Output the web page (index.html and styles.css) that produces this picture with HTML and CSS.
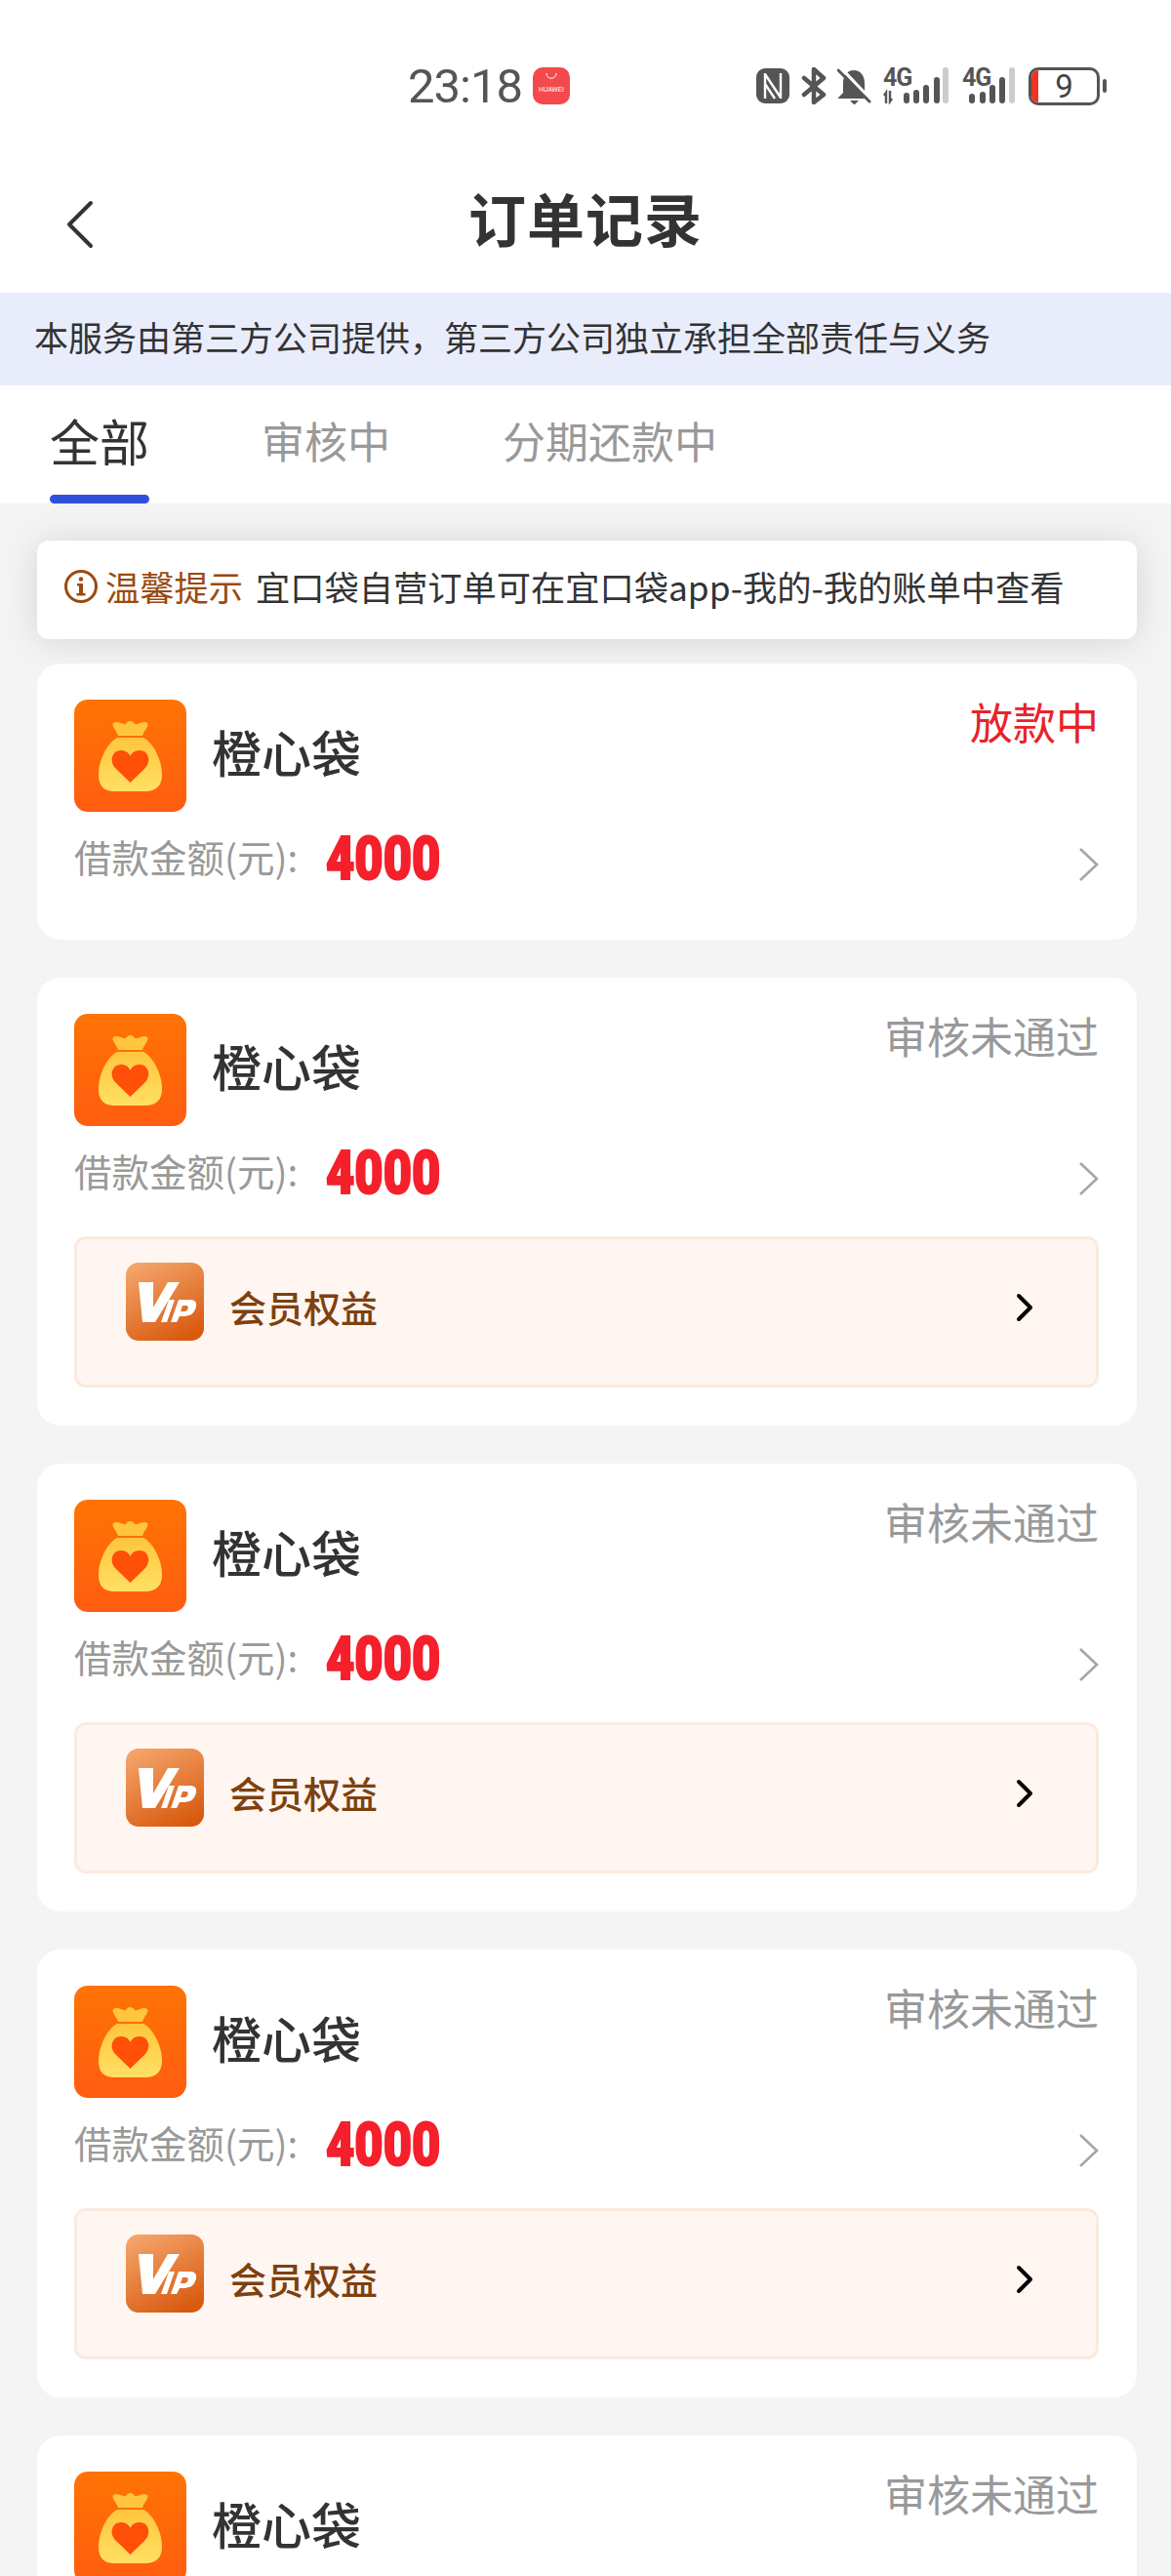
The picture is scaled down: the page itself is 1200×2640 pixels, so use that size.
FILE: index.html
```html
<!DOCTYPE html>
<html lang="zh-CN">

<head>
    <meta charset="UTF-8">
    <title>订单记录</title>
    <link rel="stylesheet" href="styles.css">
</head>

<body>
    <div class="page">
        <div class="status-bar">
            <span class="clock">23:18</span>
            <svg class="hw-icon" width="38" height="38" viewBox="0 0 38 38">
                <rect width="38" height="38" rx="10" fill="#f4494d" />
                <path d="M14 6c0 7 10 7 10 0" fill="none" stroke="#fff" stroke-width="1" />
                <text x="19" y="25" text-anchor="middle" class="hw-label">HUAWEI</text>
            </svg>
            <div class="status-icons">
                <svg width="34" height="38" viewBox="0 0 34 38">
                    <rect y="1" width="34" height="36" rx="9" fill="#555" />
                    <path d="M9 6v26M25 6v26M9 7l16 24M9 17l10 15" fill="none" stroke="#fff" stroke-width="2.4" />
                </svg>
                <svg class="bt" width="26" height="38" viewBox="0 0 26 38">
                    <path d="M3 11l20 17-10 8V2l10 9L3 28" fill="none" stroke="#555" stroke-width="4.500" stroke-linejoin="round" stroke-linecap="round" />
                </svg>
                <svg class="bell" width="35" height="38" viewBox="0 0 35 38">
                    <path d="M17 3c7 0 11 6 11 13v10l5 5v1H1v-1l5-5V16C6 9 10 3 17 3zM13 34h9l-4 4h-1z" fill="#555" />
                    <path d="M4 1l30 32" stroke="#fff" stroke-width="3" />
                    <path d="M1 3l32 32" stroke="#555" stroke-width="3" stroke-linecap="round" />
                    <path d="M4 0l31 33" stroke="#fff" stroke-width="2" />
                </svg>
                <svg class="sig sig-one" width="68" height="44" viewBox="0 -6 68 44">
                    <text x="0" y="19" class="net-label">4G</text>
                    <path d="M3 37V26l-2 3M7 24v11l2-3" fill="none" stroke="#555" stroke-width="2.4" />
                    <rect x="21" y="26" width="6" height="11" rx="3" fill="#555" />
                    <rect x="31" y="23" width="6" height="14" rx="3" fill="#555" />
                    <rect x="41" y="18" width="6" height="19" rx="3" fill="#555" />
                    <rect x="52" y="10" width="6" height="27" rx="3" fill="#555" />
                    <rect x="61" y="0" width="6" height="37" rx="3" fill="#ccc" />
                </svg>
                <svg class="sig sig-two" width="54" height="44" viewBox="0 -6 54 44">
                    <text x="0" y="19" class="net-label">4G</text>
                    <rect x="7" y="27" width="6" height="10" rx="3" fill="#555" />
                    <rect x="18" y="25" width="6" height="12" rx="3" fill="#555" />
                    <rect x="28" y="18" width="6" height="19" rx="3" fill="#555" />
                    <rect x="38" y="10" width="6" height="27" rx="3" fill="#555" />
                    <rect x="48" y="0" width="6" height="37" rx="3" fill="#ccc" />
                </svg>
                <div class="battery">
                    <div class="battery-body"><span class="battery-fill"></span><span class="battery-num">9</span></div>
                    <span class="battery-tip"></span>
                </div>
            </div>
        </div>

        <div class="title-bar">
            <svg class="back" width="30" height="50" viewBox="0 0 30 50">
                <path d="M26 3L4 25l22 22" fill="none" stroke="#333" stroke-width="4" stroke-linecap="round" stroke-linejoin="round" />
            </svg>
            <h1>订单记录</h1>
        </div>

        <div class="banner">本服务由第三方公司提供，第三方公司独立承担全部责任与义务</div>

        <div class="tabs">
            <div class="tab current">全部</div>
            <div class="tab">审核中</div>
            <div class="tab">分期还款中</div>
        </div>

        <div class="list">
            <div class="notice">
                <svg width="36" height="36" viewBox="0 0 36 36">
                    <circle cx="18" cy="18" r="15.5" fill="none" stroke="#9a4a10" stroke-width="3" />
                    <circle cx="18" cy="10.500" r="2.200" fill="#9a4a10" />
                    <path d="M14 15h6v10h2.500v2.500h-9V25H16v-7.500h-2z" fill="#9a4a10" />
                </svg>
                <span class="notice-tag">温馨提示</span>
                <span class="notice-text">宜口袋自营订单可在宜口袋app-我的-我的账单中查看</span>
            </div>

            <div class="card card-first">
                <div class="card-head">
                    <svg class="logo" width="115" height="115" viewBox="0 0 115 115"><use href="#bag" /></svg>
                    <div class="name">橙心袋</div>
                    <div class="state state-red">放款中</div>
                </div>
                <div class="amount-row">
                    <span class="amount-label">借款金额(元):</span>
                    <span class="amount">4000</span>
                    <svg class="more" width="20" height="36" viewBox="0 0 20 36"><path d="M1 2l17 16L1 34" fill="none" stroke="#a6a6a6" stroke-width="2.600" /></svg>
                </div>
            </div>

            <div class="card">
                <div class="card-head">
                    <svg class="logo" width="115" height="115" viewBox="0 0 115 115"><use href="#bag" /></svg>
                    <div class="name">橙心袋</div>
                    <div class="state">审核未通过</div>
                </div>
                <div class="amount-row">
                    <span class="amount-label">借款金额(元):</span>
                    <span class="amount">4000</span>
                    <svg class="more" width="20" height="36" viewBox="0 0 20 36"><path d="M1 2l17 16L1 34" fill="none" stroke="#a6a6a6" stroke-width="2.600" /></svg>
                </div>
                <div class="vip-row">
                    <svg class="vip-icon" width="80" height="80" viewBox="0 0 80 80"><use href="#vip" /></svg>
                    <span class="vip-text">会员权益</span>
                    <svg class="vip-more" width="20" height="32" viewBox="0 0 20 32"><path d="M3 4l12 12L3 28" fill="none" stroke="#000" stroke-width="4" stroke-linecap="round" stroke-linejoin="round" /></svg>
                </div>
            </div>

            <div class="card">
                <div class="card-head">
                    <svg class="logo" width="115" height="115" viewBox="0 0 115 115"><use href="#bag" /></svg>
                    <div class="name">橙心袋</div>
                    <div class="state">审核未通过</div>
                </div>
                <div class="amount-row">
                    <span class="amount-label">借款金额(元):</span>
                    <span class="amount">4000</span>
                    <svg class="more" width="20" height="36" viewBox="0 0 20 36"><path d="M1 2l17 16L1 34" fill="none" stroke="#a6a6a6" stroke-width="2.600" /></svg>
                </div>
                <div class="vip-row">
                    <svg class="vip-icon" width="80" height="80" viewBox="0 0 80 80"><use href="#vip" /></svg>
                    <span class="vip-text">会员权益</span>
                    <svg class="vip-more" width="20" height="32" viewBox="0 0 20 32"><path d="M3 4l12 12L3 28" fill="none" stroke="#000" stroke-width="4" stroke-linecap="round" stroke-linejoin="round" /></svg>
                </div>
            </div>

            <div class="card">
                <div class="card-head">
                    <svg class="logo" width="115" height="115" viewBox="0 0 115 115"><use href="#bag" /></svg>
                    <div class="name">橙心袋</div>
                    <div class="state">审核未通过</div>
                </div>
                <div class="amount-row">
                    <span class="amount-label">借款金额(元):</span>
                    <span class="amount">4000</span>
                    <svg class="more" width="20" height="36" viewBox="0 0 20 36"><path d="M1 2l17 16L1 34" fill="none" stroke="#a6a6a6" stroke-width="2.600" /></svg>
                </div>
                <div class="vip-row">
                    <svg class="vip-icon" width="80" height="80" viewBox="0 0 80 80"><use href="#vip" /></svg>
                    <span class="vip-text">会员权益</span>
                    <svg class="vip-more" width="20" height="32" viewBox="0 0 20 32"><path d="M3 4l12 12L3 28" fill="none" stroke="#000" stroke-width="4" stroke-linecap="round" stroke-linejoin="round" /></svg>
                </div>
            </div>

            <div class="card">
                <div class="card-head">
                    <svg class="logo" width="115" height="115" viewBox="0 0 115 115"><use href="#bag" /></svg>
                    <div class="name">橙心袋</div>
                    <div class="state">审核未通过</div>
                </div>
            </div>
        </div>
    </div>

    <!-- shared icon shapes -->
    <svg class="defs" width="0" height="0">
        <defs>
            <linearGradient id="bagBg" x1="0" y1="0" x2="0" y2="1">
                <stop offset="0" stop-color="#ff7405" />
                <stop offset="1" stop-color="#ff5c10" />
            </linearGradient>
            <linearGradient id="bagFill" x1="0" y1="0" x2="0" y2="1">
                <stop offset="0" stop-color="#ffc63d" />
                <stop offset="1" stop-color="#ffe063" />
            </linearGradient>
            <linearGradient id="vipBg" x1="0.200" y1="0" x2="0.700" y2="1">
                <stop offset="0" stop-color="#f4a46a" />
                <stop offset="1" stop-color="#d85a0f" />
            </linearGradient>
            <symbol id="bag" viewBox="0 0 115 115">
                <rect width="115" height="115" rx="14" fill="url(#bagBg)" />
                <path d="M40 24C44 21 50 26 53 25 55 21 60 21 62 25 66 26 71 21 75 24 77 27 72 31 70 37H45C43 31 38 27 40 24z" fill="#ffc63d" />
                <path d="M44 39H71C81 44 90 62 90 77 90 89 83 94 73 94H41C31 94 25 89 25 77 25 62 34 44 44 39z" fill="url(#bagFill)" />
                <path d="M57.500 85L43 71C35 63 39 52 48 52 52 52 56 54 57.500 58 59 54 63 52 67 52 76 52 80 63 72 71z" fill="#ff4f08" />
            </symbol>
            <symbol id="vip" viewBox="0 0 80 80">
                <rect width="80" height="80" rx="13" fill="url(#vipBg)" />
                <path d="M13 20H28V46L43 20H55L30 61H17z" fill="#fff" />
                <path d="M36 61L44 38H50L42 61z" fill="#fff" />
                <path fill-rule="evenodd" d="M46 61L54 38H66C73 38 73 44 71 48 69 53 65 55 58 55H55L52 61zM58 44L56 50H60C64 50 65 44 62 44z" fill="#fff" />
            </symbol>
        </defs>
    </svg>
</body>

</html>
```

FILE: styles.css
```css
* {
    margin: 0;
    padding: 0;
    box-sizing: border-box;
}

body {
    background-color: #f4f4f4;
    font-family: "Noto Sans CJK SC", "Noto Sans", sans-serif;
    color: #333;
}

.page {
    width: 1200px;
    height: 2640px;
    overflow: hidden;
}

.defs {
    position: absolute;
}

.status-bar {
    height: 160px;
    background-color: #fff;
    display: flex;
    align-items: center;
    padding: 16px 66px 0 418px;
}

.clock {
    font-family: Roboto, sans-serif;
    font-weight: 400;
    font-size: 49px;
    letter-spacing: -1px;
    color: #555;
}

.hw-icon {
    margin-left: 11px;
}

.hw-label {
    font-family: "Liberation Sans", sans-serif;
    font-size: 6.500px;
    fill: #fff;
}

.status-icons {
    margin-left: auto;
    display: flex;
    align-items: center;
    gap: 12px;
}

.bt {
    margin-right: -1px;
}

.sig {
    margin-bottom: 6px;
}

.sig-two {
    margin-left: 1px;
}

.net-label {
    font-family: Roboto, sans-serif;
    font-size: 25px;
    font-weight: 700;
    letter-spacing: -1px;
    fill: #555;
}

.battery {
    display: flex;
    align-items: center;
    gap: 3px;
    margin-left: 2px;
}

.battery-body {
    width: 73px;
    height: 39px;
    border: 3px solid #555;
    border-radius: 10px;
    position: relative;
    overflow: hidden;
    text-align: center;
    font-family: Roboto, sans-serif;
    font-size: 33px;
    line-height: 33px;
    color: #444;
}

.battery-fill {
    position: absolute;
    left: 0;
    top: 0;
    width: 7px;
    height: 100%;
    background-color: #f0331f;
}

.battery-tip {
    width: 4px;
    height: 14px;
    border-radius: 2px;
    background-color: #555;
}

.title-bar {
    height: 140px;
    background-color: #fff;
    display: flex;
    align-items: center;
    justify-content: center;
    position: relative;
}

.back {
    position: absolute;
    left: 67px;
    top: 45px;
}

.title-bar h1 {
    font-size: 59px;
    font-weight: 700;
    letter-spacing: 1px;
    line-height: 1;
    margin-top: -16px;
}

.banner {
    height: 95px;
    background-color: #e9edfb;
    display: flex;
    align-items: center;
    padding: 0 0 7px 35px;
    font-size: 35px;
}

.tabs {
    height: 121px;
    background-color: #fff;
    display: flex;
    padding-left: 51px;
}

.tab {
    margin-right: 115px;
    font-size: 44px;
    color: #999;
    line-height: 113px;
    position: relative;
}

.tab.current {
    font-size: 51px;
    color: #333;
}

.tab.current::after {
    content: "";
    position: absolute;
    left: 0;
    right: 0;
    bottom: 0;
    height: 9px;
    border-radius: 5px;
    background-color: #2f4fdc;
}

.list {
    padding: 38px 35px 0 38px;
}

.notice {
    height: 101px;
    background-color: #fff;
    border-radius: 12px;
    box-shadow: 0 2px 36px rgba(0, 0, 0, .13);
    display: flex;
    align-items: center;
    padding: 0 0 8px 27px;
    font-size: 35.250px;
    margin-bottom: 25px;
    position: relative;
}

.notice-tag {
    color: #9a4a10;
    margin-left: 7px;
}

.notice-text {
    margin-left: 13px;
}

.card {
    background-color: #fff;
    border-radius: 24px;
    padding: 37px 39px 37px 38px;
    height: 459px;
    margin-bottom: 39px;
}

.card-first {
    height: 283px;
}

.card-head {
    height: 115px;
    display: flex;
    align-items: center;
}

.logo {
    flex-shrink: 0;
}

.name {
    margin: -9px 0 0 26px;
    font-size: 51px;
    font-weight: 500;
}

.state {
    margin-left: auto;
    align-self: flex-start;
    font-size: 44px;
    line-height: 44px;
    color: #999;
}

.state-red {
    color: #e9222a;
}

.amount-row {
    display: flex;
    align-items: center;
    height: 60px;
    margin-top: 18px;
}

.amount-label {
    margin-top: -6px;
    font-size: 38.500px;
    color: #999;
}

.amount {
    margin-left: 29px;
    font-family: Roboto, sans-serif;
    font-size: 61px;
    font-weight: 900;
    line-height: 60px;
    color: #f5202b;
    -webkit-text-stroke: 2px #f5202b;
    transform: scaleX(.83);
    transform-origin: left;
}

.more {
    margin-left: auto;
    margin-top: 12px;
}

.vip-row {
    height: 155px;
    margin-top: 35px;
    background-color: #fff6f1;
    border: 3px solid #fbeadf;
    border-radius: 12px;
    display: flex;
    align-items: center;
    padding: 0 62px 0 50px;
}

.vip-text {
    margin: -12px 0 0 26px;
    font-size: 38px;
    font-weight: 500;
    color: #7e400f;
}

.vip-icon {
    margin-top: -22px;
}

.vip-more {
    margin-left: auto;
    margin-top: -10px;
}
```
